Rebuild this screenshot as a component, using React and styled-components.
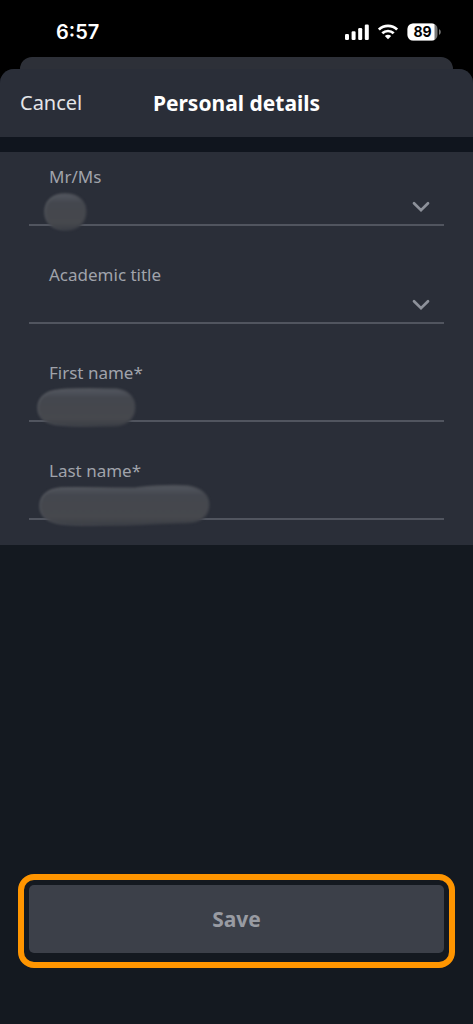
import React, { useState } from 'react';
import styled, { createGlobalStyle } from 'styled-components';

const GlobalStyle = createGlobalStyle`
*{
  box-sizing: border-box;
}

body{
  margin: 0;
  background: #000;
}

button, input, select{
  font-family: inherit;
}
`;

const SignalIcon = () => (
  <svg width="24" height="16" viewBox="0 0 24 16" fill="#fff" aria-hidden="true">
    <rect x="0" y="10" width="4" height="6" rx="1.2" />
    <rect x="6.6" y="7.3" width="4" height="8.7" rx="1.2" />
    <rect x="13.2" y="4" width="4" height="12" rx="1.2" />
    <rect x="19.8" y="0.5" width="4" height="15.5" rx="1.2" />
  </svg>
);

const WifiIcon = () => (
  <svg width="20" height="16" viewBox="0 0 20 16" aria-hidden="true">
    <g fill="none" stroke="#fff" strokeWidth="2.7">
      <path d="M0.9 5.6 A13 13 0 0 1 19.1 5.6" />
      <path d="M4.3 9.3 A8.2 8.2 0 0 1 15.7 9.3" />
    </g>
    <path d="M6.8 12 A5 5 0 0 1 13.2 12 L10 15.3 Z" fill="#fff" />
  </svg>
);

const BatteryIcon = () => (
  <svg width="34" height="18" viewBox="0 0 34 18" aria-hidden="true">
    <defs>
      <clipPath id="level"><rect width="27.5" height="18" /></clipPath>
    </defs>
    <rect x="0.5" y="0.5" width="30" height="17" rx="5.5" fill="#777" />
    <rect x="0.5" y="0.5" width="30" height="17" rx="5.5" fill="#fff" clipPath="url(#level)" />
    <path d="M32 6 Q33.8 7 33.8 9 Q33.8 11 32 12 Z" fill="#777" />
    <text x="15.5" y="14" textAnchor="middle" fontFamily="Inter, sans-serif"
      fontSize="14" fontWeight="700" fill="#000">89</text>
  </svg>
);

const ChevronIcon = () => (
  <svg width="18" height="12" viewBox="0 0 18 12" aria-hidden="true">
    <path d="M2 2.2 L9 9.2 L16 2.2" fill="none" stroke="#8d919a" strokeWidth="2.7" strokeLinecap="round" />
  </svg>
);

const masks = {
  title: {
    width: 43, height: 38, left: 15, top: 25,
    path: 'M21 1 C35 1 42 9 42 19 C42 30 34 37 22 37 C9 37 1 30 1 19 C1 8 9 1 21 1 Z',
  },
  firstName: {
    width: 99, height: 39, left: 8, top: 24,
    path: 'M22 2 C35 0 65 1 79 1 C91 2 98 10 98 20 C98 31 89 38 77 38 C60 38 40 39 23 37 C9 36 1 30 1 20 C1 10 9 3 22 2 Z',
  },
  lastName: {
    width: 171, height: 41, left: 10, top: 23,
    path: 'M22 3 C45 2 78 4 97 3 C115 1 134 0 149 1 C162 3 170 10 170 20 C170 32 161 38 147 38 C125 38 100 40 80 40 C60 40 38 41 22 39 C9 37 1 31 1 21 C1 11 9 4 22 3 Z',
  },
};

const ValueMask = ({ name }) => {
  const { width, height, left, top, path } = masks[name];
  return (
    <MaskLayer $left={left} $top={top}>
      <svg width={width} height={height} viewBox={`0 0 ${width} ${height}`} overflow="visible" aria-hidden="true">
        <defs>
          <linearGradient id={`${name}-fill`} x1="0" y1="0" x2="0" y2="1">
            <stop offset="0" stopColor="#535760" />
            <stop offset="0.25" stopColor="#44474e" />
            <stop offset="0.8" stopColor="#46484d" />
            <stop offset="1" stopColor="#3b3e45" />
          </linearGradient>
          <linearGradient id={`${name}-edge`} x1="0" y1="0" x2="1" y2="1">
            <stop offset="0" stopColor="#5c5f65" />
            <stop offset="0.5" stopColor="#464950" />
            <stop offset="1" stopColor="#34373f" />
          </linearGradient>
          <filter id={`${name}-soft`} colorInterpolationFilters="sRGB">
            <feGaussianBlur stdDeviation="0.8" />
          </filter>
        </defs>
        <path d={path} fill={`url(#${name}-fill)`} stroke={`url(#${name}-edge)`}
          strokeWidth="1.5" filter={`url(#${name}-soft)`} />
      </svg>
    </MaskLayer>
  );
};

const App = () => {
  const [details, setDetails] = useState({ title: '', academicTitle: '', firstName: '', lastName: '' });
  const handleChange = (e) => {
    setDetails({ ...details, [e.target.name]: e.target.value });
  };

  return (
    <Page>
      <GlobalStyle />
      <StatusBar>
        <Time>6:57</Time>
        <StatusIcons>
          <SignalIcon />
          <WifiIcon />
          <BatteryIcon />
        </StatusIcons>
      </StatusBar>
      <BackCard />
      <Sheet>
        <Header>
          <CancelButton type="button">Cancel</CancelButton>
          <Title>Personal details</Title>
        </Header>
        <Form>
          <Fields>
            <Field>
              <Label htmlFor="title">Mr/Ms</Label>
              <Select id="title" name="title" value={details.title} onChange={handleChange}>
                <option value="" aria-label="Not set" />
              </Select>
              <Arrow><ChevronIcon /></Arrow>
              <ValueMask name="title" />
            </Field>
            <Field>
              <Label htmlFor="academicTitle">Academic title</Label>
              <Select id="academicTitle" name="academicTitle" value={details.academicTitle} onChange={handleChange}>
                <option value="" aria-label="Not set" />
              </Select>
              <Arrow><ChevronIcon /></Arrow>
            </Field>
            <Field>
              <Label htmlFor="firstName">First name*</Label>
              <Input id="firstName" name="firstName" value={details.firstName} onChange={handleChange} />
              <ValueMask name="firstName" />
            </Field>
            <Field>
              <Label htmlFor="lastName">Last name*</Label>
              <Input id="lastName" name="lastName" value={details.lastName} onChange={handleChange} />
              <ValueMask name="lastName" />
            </Field>
          </Fields>
          <SaveFrame>
            <SaveButton type="submit" disabled>Save</SaveButton>
          </SaveFrame>
        </Form>
      </Sheet>
    </Page>
  );
}

const Page = styled.div`
display: flex;
flex-direction: column;
min-height: 100vh;
background: #000;
font-family: 'Noto Sans', sans-serif;
`;

const StatusBar = styled.div`
display: flex;
align-items: center;
justify-content: space-between;
height: 57px;
padding: 6px 32px 0 56px;
`;

const Time = styled.span`
font-family: Inter, sans-serif;
font-size: 20px;
font-weight: 600;
line-height: 24px;
color: #fff;
`;

const StatusIcons = styled.div`
display: flex;
align-items: center;
gap: 9px;
`;

const BackCard = styled.div`
height: 12px;
margin: 0 20px;
border-radius: 12px 12px 0 0;
background: #2d3038;
`;

const Sheet = styled.main`
display: flex;
flex-direction: column;
flex-grow: 1;
border-radius: 14px 14px 0 0;
background: #141920;
overflow: hidden;
`;

const Header = styled.header`
display: grid;
grid-template-columns: 1fr auto 1fr;
align-items: center;
height: 68px;
padding: 0 20px;
background: #2a2e38;
`;

const CancelButton = styled.button`
justify-self: start;
padding: 0;
border: none;
background: none;
color: #e4e5e8;
font-size: 20px;
line-height: 28px;
cursor: pointer;
`;

const Title = styled.h1`
margin: 0;
color: #fff;
font-size: 21px;
font-weight: 700;
line-height: 28px;
`;

const Form = styled.form`
display: flex;
flex-direction: column;
flex-grow: 1;
border-top: solid 15px #10151e;
`;

const Fields = styled.div`
display: flex;
flex-direction: column;
gap: 40px;
padding: 16px 29px 25px;
background: #2a2e38;
`;

const Field = styled.div`
position: relative;
display: flex;
flex-direction: column;
height: 58px;
border-bottom: solid 2px #51555f;
`;

const Label = styled.label`
padding-left: 20px;
color: #a0a3ab;
font-size: 17px;
line-height: 18px;
`;

const Input = styled.input`
width: 100%;
height: 38px;
padding: 0 20px;
border: none;
outline: none;
background: none;
color: #fff;
font-size: 17px;
`;

const Select = styled(Input).attrs({ as: 'select' })`
appearance: none;
`;

const Arrow = styled.span`
position: absolute;
right: 14px;
bottom: 11px;
display: flex;
pointer-events: none;
`;

const MaskLayer = styled.span`
position: absolute;
left: ${({ $left }) => $left}px;
top: ${({ $top }) => $top}px;
display: flex;
pointer-events: none;
`;

const SaveFrame = styled.div`
margin: auto 18px 56px;
padding: 5px 5px 9px;
border: solid 6px #ff9500;
border-radius: 16px;
`;

const SaveButton = styled.button`
display: block;
width: 100%;
height: 68px;
border: none;
border-radius: 5px;
background: #3c4049;
color: #989ba2;
font-size: 21px;
font-weight: 700;
`;

export default App;
